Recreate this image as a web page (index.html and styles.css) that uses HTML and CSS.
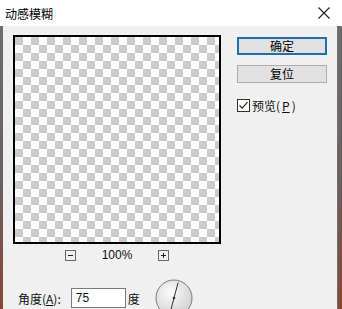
FILE: index.html
```html
<!DOCTYPE html>
<html lang="zh-CN">
<head>
    <meta charset="UTF-8">
    <title>动感模糊</title>
    <link rel="stylesheet" href="styles.css">
</head>
<body>
    <div class="window">
        <div class="titlebar">
            <span class="title">动感模糊</span>
            <svg class="close" width="12" height="12" viewBox="0 0 12 12">
                <path d="M0.5 0.5 L11.5 11.5 M11.5 0.5 L0.5 11.5" stroke="#222" stroke-width="1.1" fill="none"/>
            </svg>
        </div>

        <div class="panel">
            <div class="main">
                <div class="left">
                    <div class="preview"></div>
                    <div class="zoombar">
                        <svg width="11" height="11" viewBox="0 0 11 11">
                            <rect x="0.5" y="0.5" width="10" height="10" fill="#f0f0f0" stroke="#666"/>
                            <path d="M3 5.5 H8" stroke="#222"/>
                        </svg>
                        <span class="zoom-value">100%</span>
                        <svg width="11" height="11" viewBox="0 0 11 11">
                            <rect x="0.5" y="0.5" width="10" height="10" fill="#f0f0f0" stroke="#666"/>
                            <path d="M3 5.5 H8 M5.5 3 V8" stroke="#222"/>
                        </svg>
                    </div>
                </div>

                <div class="right">
                    <button class="btn btn-default">确定</button>
                    <button class="btn">复位</button>
                    <label class="check">
                        <span class="box">
                            <svg width="11" height="11" viewBox="0 0 11 11">
                                <path d="M1.5 5.5 L4.2 8.2 L9.5 2.2" stroke="#222" stroke-width="1.1" fill="none"/>
                            </svg>
                        </span>
                        预览(<u>P</u>)
                    </label>
                </div>
            </div>

            <div class="angle-row">
                <span class="label">角度(<u>A</u>):</span>
                <div class="field">75</div>
                <span class="unit">度</span>
                <svg class="dial" width="38" height="38" viewBox="0 0 38 38">
                    <defs>
                        <radialGradient id="dialFill" cx="0.4" cy="0.35" r="0.7">
                            <stop offset="0" stop-color="#fbfbfb"/>
                            <stop offset="1" stop-color="#d0d0d0"/>
                        </radialGradient>
                    </defs>
                    <circle cx="19" cy="19" r="18" fill="url(#dialFill)" stroke="#7a7a7a"/>
                    <path d="M23.1 3.5 L14.9 34.5" stroke="#333" stroke-width="1"/>
                    <circle cx="19" cy="19" r="1.3" fill="#333"/>
                </svg>
            </div>
        </div>
    </div>
</body>
</html>
```

FILE: styles.css
```css
* {
    box-sizing: border-box;
}

body {
    margin: 0;
    font-family: "Liberation Sans", "Noto Sans CJK SC", sans-serif;
    font-size: 12px;
    color: #111;
}

.window {
    width: 342px;
    height: 309px;
    overflow: hidden;
    background: #f0f0f0;
}

.titlebar {
    height: 26px;
    background: #fff;
    display: flex;
    align-items: center;
    justify-content: space-between;
    padding: 0 12px 0 5px;
}

.title {
    font-family: "Noto Sans CJK SC", sans-serif;
    font-size: 12px;
    color: #000;
}

.panel {
    height: 283px;
    border-left: 3px solid;
    border-image: linear-gradient(#6c6c6c, #6a6060 55%, #8a4533) 1;
    border-right: 4px solid #e4e4e4;
    box-shadow: inset -1px 0 0 #707070;
}

.main {
    display: flex;
    padding: 9px 0 0 10px;
    gap: 16px;
}

.preview {
    width: 208px;
    height: 209px;
    border: 2px solid #000;
    background-color: #fff;
    background-image:
        linear-gradient(45deg, #cbcbcb 25%, transparent 25%, transparent 75%, #cbcbcb 75%),
        linear-gradient(45deg, #cbcbcb 25%, transparent 25%, transparent 75%, #cbcbcb 75%);
    background-size: 16px 16px;
    background-position: 8px 0, 0 8px;
}

.zoombar {
    height: 22px;
    display: flex;
    align-items: center;
    justify-content: center;
    gap: 26px;
}

.zoom-value {
    font-size: 12px;
}

.right {
    display: flex;
    flex-direction: column;
    padding-top: 2px;
}

.btn {
    width: 90px;
    height: 18px;
    padding: 0;
    font-family: "Noto Sans CJK SC", sans-serif;
    font-size: 12px;
    line-height: 16px;
    color: #000;
    background: #e1e1e1;
    border: 1px solid #adadad;
    margin-bottom: 10px;
}

.btn-default {
    border: 2px solid #1f6fa8;
    line-height: 14px;
}

.check {
    display: flex;
    align-items: center;
    gap: 2px;
    margin-top: 4px;
    font-family: "Noto Sans CJK SC", sans-serif;
}

.box {
    width: 13px;
    height: 13px;
    border: 1px solid #333;
    background: #fff;
    display: flex;
    align-items: center;
    justify-content: center;
}

.angle-row {
    display: flex;
    align-items: center;
    margin-top: 13px;
    padding-left: 15px;
}

.label {
    font-family: "Noto Sans CJK SC", sans-serif;
    margin-right: 10px;
}

.field {
    width: 55px;
    height: 20px;
    border: 1px solid #7a7a7a;
    background: #fff;
    padding-left: 4px;
    line-height: 18px;
    font-size: 12px;
}

.unit {
    font-family: "Noto Sans CJK SC", sans-serif;
    margin-left: 2px;
    margin-right: 15px;
}

.dial {
    flex: none;
}
```
